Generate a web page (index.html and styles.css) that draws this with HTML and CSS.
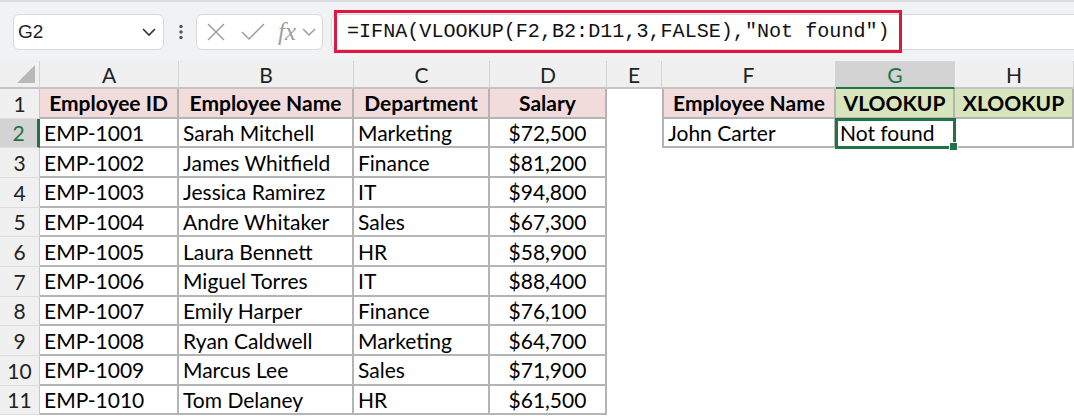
FILE: index.html
```html
<!DOCTYPE html>
<html lang="en">
<head>
  <meta charset="UTF-8">
  <title>Employee lookup</title>
  <link rel="stylesheet" href="styles.css">
</head>
<body>
  <div class="toolbar">
    <div class="namebox">
      <span>G2</span>
      <svg width="16" height="10" viewBox="0 0 16 10"><path d="M2 2 L8 8 L14 2" fill="none" stroke="#333" stroke-width="1.6"/></svg>
    </div>
    <svg class="grip" width="6" height="16" viewBox="0 0 6 16">
      <circle cx="3" cy="2.5" r="1.7" fill="#555"/>
      <circle cx="3" cy="8" r="1.7" fill="#555"/>
      <circle cx="3" cy="13.5" r="1.7" fill="#555"/>
    </svg>
    <div class="fxbtns">
      <svg width="20" height="20" viewBox="0 0 20 20"><path d="M2 2 L18 18 M18 2 L2 18" stroke="#9e9e9e" stroke-width="1.5"/></svg>
      <svg width="26" height="20" viewBox="0 0 26 20"><path d="M2 10 L9 17 L24 2" fill="none" stroke="#9e9e9e" stroke-width="1.5"/></svg>
      <span class="fx">fx</span>
      <svg width="14" height="10" viewBox="0 0 14 10"><path d="M1 2 L7 8 L13 2" fill="none" stroke="#9e9e9e" stroke-width="1.5"/></svg>
    </div>
    <div class="formula">
      <span class="ftext">=IFNA(VLOOKUP(F2,B2:D11,3,FALSE),"Not found")</span>
    </div>
  </div>

  <div class="sheet">
    <!-- column letters -->
    <div class="corner"></div>
    <div class="ch">A</div>
    <div class="ch">B</div>
    <div class="ch">C</div>
    <div class="ch">D</div>
    <div class="ch">E</div>
    <div class="ch">F</div>
    <div class="ch on">G</div>
    <div class="ch">H</div>

    <!-- row 1 -->
    <div class="rh">1</div>
    <div class="cell t hd pink">Employee ID</div>
    <div class="cell t hd pink">Employee Name</div>
    <div class="cell t hd pink">Department</div>
    <div class="cell t hd pink">Salary</div>
    <div class="cell"></div>
    <div class="cell t lb hd pink">Employee Name</div>
    <div class="cell t hd green">VLOOKUP</div>
    <div class="cell t hd green">XLOOKUP</div>

    <!-- row 2 -->
    <div class="rh on">2</div>
    <div class="cell t">EMP-1001</div>
    <div class="cell t">Sarah Mitchell</div>
    <div class="cell t">Marketing</div>
    <div class="cell t num">$72,500</div>
    <div class="cell"></div>
    <div class="cell t lb">John Carter</div>
    <div class="cell t sel">Not found<span class="handle"></span></div>
    <div class="cell t"></div>

    <div class="rh">3</div>
    <div class="cell t">EMP-1002</div>
    <div class="cell t">James Whitfield</div>
    <div class="cell t">Finance</div>
    <div class="cell t num">$81,200</div>
    <div class="cell wide"></div>

    <div class="rh">4</div>
    <div class="cell t">EMP-1003</div>
    <div class="cell t">Jessica Ramirez</div>
    <div class="cell t">IT</div>
    <div class="cell t num">$94,800</div>
    <div class="cell wide"></div>

    <div class="rh">5</div>
    <div class="cell t">EMP-1004</div>
    <div class="cell t">Andre Whitaker</div>
    <div class="cell t">Sales</div>
    <div class="cell t num">$67,300</div>
    <div class="cell wide"></div>

    <div class="rh">6</div>
    <div class="cell t">EMP-1005</div>
    <div class="cell t">Laura Bennett</div>
    <div class="cell t">HR</div>
    <div class="cell t num">$58,900</div>
    <div class="cell wide"></div>

    <div class="rh">7</div>
    <div class="cell t">EMP-1006</div>
    <div class="cell t">Miguel Torres</div>
    <div class="cell t">IT</div>
    <div class="cell t num">$88,400</div>
    <div class="cell wide"></div>

    <div class="rh">8</div>
    <div class="cell t">EMP-1007</div>
    <div class="cell t">Emily Harper</div>
    <div class="cell t">Finance</div>
    <div class="cell t num">$76,100</div>
    <div class="cell wide"></div>

    <div class="rh">9</div>
    <div class="cell t">EMP-1008</div>
    <div class="cell t">Ryan Caldwell</div>
    <div class="cell t">Marketing</div>
    <div class="cell t num">$64,700</div>
    <div class="cell wide"></div>

    <div class="rh">10</div>
    <div class="cell t">EMP-1009</div>
    <div class="cell t">Marcus Lee</div>
    <div class="cell t">Sales</div>
    <div class="cell t num">$71,900</div>
    <div class="cell wide"></div>

    <div class="rh">11</div>
    <div class="cell t">EMP-1010</div>
    <div class="cell t">Tom Delaney</div>
    <div class="cell t">HR</div>
    <div class="cell t num">$61,500</div>
    <div class="cell wide"></div>
  </div>
</body>
</html>
```

FILE: styles.css
```css
* { box-sizing: border-box; }

body {
  margin: 0;
  background: #ffffff;
  font-family: 'Lato', 'Noto Sans', sans-serif;
  overflow: hidden;
}

/* formula bar strip */
.toolbar {
  height: 61px;
  background: #f1f2f4;
  border-top: 2px solid #dcdde0;
  display: flex;
  align-items: center;
  padding-left: 13px;
}

.namebox, .fxbtns, .formula {
  height: 36px;
  background: #ffffff;
  border: 1px solid #d8d8d8;
  border-radius: 6px;
  display: flex;
  align-items: center;
}

.namebox {
  width: 151px;
  padding: 0 6px 0 4px;
  justify-content: space-between;
  font-family: 'Liberation Sans', Arial, sans-serif;
  font-size: 19px;
  color: #222;
}

.grip { margin: 0 12px 0 14px; }

.fxbtns {
  width: 127px;
  padding-left: 9px;
  gap: 14px;
}

.fx {
  font-family: 'Liberation Serif', serif;
  font-style: italic;
  font-size: 25px;
  color: #9e9e9e;
  margin-left: -2px;
  margin-right: -8px;
}

.formula {
  flex: 1;
  margin-left: 8px;
  border-right: none;
  border-radius: 6px 0 0 6px;
}

.ftext {
  margin-left: 2px;
  height: 43px;
  width: 568px;
  border: 3px solid #e0183f;
  padding-left: 10px;
  display: flex;
  align-items: center;
  font-family: 'Liberation Mono', monospace;
  font-size: 20.1px;
  color: #111;
  white-space: nowrap;
}

/* worksheet grid */
.sheet {
  display: grid;
  grid-template-columns: 40px 139px 175px 136px 117px 55px 174px 119px 119px;
  grid-template-rows: 28px repeat(11, 29.67px);
  font-size: 21px;
}

.corner {
  background: #f0f0f0;
  border-right: 1px solid #d4d4d4;
  border-bottom: 2px solid #c4c4c4;
  position: relative;
}

.corner::after {
  content: "";
  position: absolute;
  right: 4px;
  bottom: 4px;
  border-left: 18px solid transparent;
  border-bottom: 18px solid #b9b9b9;
}

.ch {
  background: #f0f0f0;
  border-right: 1px solid #d4d4d4;
  border-bottom: 2px solid #c4c4c4;
  display: flex;
  align-items: center;
  justify-content: center;
  color: #222;
}

.ch.on {
  background: #d3d3d3;
  color: #217346;
  border-bottom-color: #217346;
}

.rh {
  background: #f0f0f0;
  border-right: 1px solid #c8c8c8;
  border-bottom: 1px solid #dddddd;
  display: flex;
  align-items: center;
  justify-content: center;
  color: #222;
}

.rh.on {
  background: #d3d3d3;
  color: #217346;
  border-right: 3px solid #217346;
}

.cell {
  display: flex;
  align-items: center;
  padding-left: 4px;
  color: #000;
  white-space: nowrap;
}

.wide { grid-column: span 4; }

.t {
  border-right: 2px solid #b4b4b4;
  border-bottom: 2px solid #b4b4b4;
}

.lb { border-left: 2px solid #b4b4b4; }

.hd {
  font-weight: bold;
  justify-content: center;
  padding-left: 0;
}

.pink { background: #f2dcdb; }
.green { background: #d8e4bc; }

.num {
  justify-content: center;
  padding-left: 0;
}

/* active cell */
.sel {
  position: relative;
  z-index: 1;
  outline: 3px solid #217346;
  outline-offset: -2px;
}

.handle {
  position: absolute;
  right: -5px;
  bottom: -5px;
  width: 9px;
  height: 9px;
  background: #217346;
  border: 1px solid #fff;
}
```
